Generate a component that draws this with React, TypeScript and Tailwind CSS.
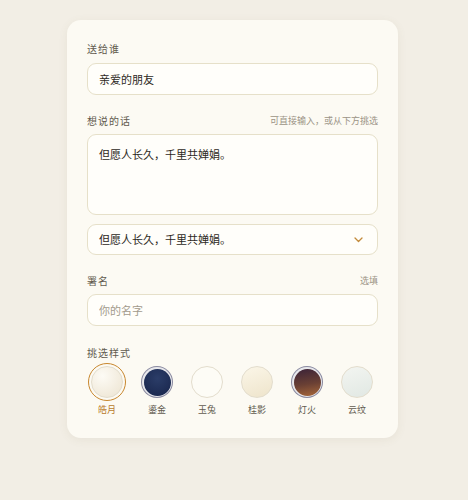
import { useState } from "react";

const styles = [
  { name: "皓月", bg: "bg-[radial-gradient(circle_at_35%_30%,#fdfbf5,#ece3d0)]", ring: "" },
  { name: "鎏金", bg: "bg-[radial-gradient(circle_at_50%_35%,#2b3d68,#17244a)]", ring: "dark" },
  { name: "玉兔", bg: "bg-[#fdfcf6]", ring: "" },
  { name: "桂影", bg: "bg-[linear-gradient(160deg,#fbf6e8,#eee4cb)]", ring: "" },
  { name: "灯火", bg: "bg-[linear-gradient(170deg,#3a2238,#6a4034_55%,#a8683a)]", ring: "dark" },
  { name: "云纹", bg: "bg-[linear-gradient(160deg,#f3f5f1,#e1e8e3)]", ring: "" },
];

const font = { fontFamily: '"Noto Sans CJK SC", "Noto Sans", sans-serif' };

const App = () => {
  const [picked, setPicked] = useState(0);

  return (
    <div className="flex min-h-[500px] justify-center bg-[#f2eee5] pt-5 pr-[3px]" style={font}>
      <div className="h-fit w-[331px] rounded-[14px] bg-[#fcfaf3] px-5 pt-[21px] pb-[22px] shadow-[0_2px_10px_rgba(120,100,60,0.08)]">
        {/* 送给谁 */}
        <div className="h-[15px] text-[10px] leading-[15px] tracking-[1px] text-[#625a4f]">送给谁</div>
        <input
          defaultValue="亲爱的朋友"
          className="mt-[7px] block h-8 w-full rounded-[9px] border border-[#e6e0c9] bg-[#fffefa] px-[11px] text-[11px] text-[#2d2923] outline-none"
        />

        {/* 想说的话 */}
        <div className="mt-[18px] flex h-[15px] items-center justify-between">
          <span className="text-[10px] leading-[15px] tracking-[1px] text-[#625a4f]">想说的话</span>
          <span className="text-[9px] text-[#9b9385]">可直接输入，或从下方挑选</span>
        </div>
        <textarea
          defaultValue="但愿人长久，千里共婵娟。"
          className="mt-[6px] block h-[81px] w-full resize-none rounded-[9px] border border-[#e6e0c9] bg-[#fffefa] px-[11px] pt-[11px] text-[11px] leading-[16px] text-[#2d2923] outline-none"
        />
        <div className="mt-[9px] flex h-[31px] items-center justify-between rounded-[9px] border border-[#e6e0c9] bg-[#fffefa] pl-[11px] pr-[14px]">
          <span className="text-[11px] text-[#2d2923]">但愿人长久，千里共婵娟。</span>
          <svg width="9" height="6" viewBox="0 0 9 6" fill="none">
            <path d="M1 1l3.5 3.5L8 1" stroke="#c28a3a" strokeWidth="1.3" strokeLinecap="round" strokeLinejoin="round" />
          </svg>
        </div>

        {/* 署名 */}
        <div className="mt-[18px] flex h-[15px] items-center justify-between">
          <span className="text-[10px] leading-[15px] tracking-[1px] text-[#625a4f]">署名</span>
          <span className="text-[9px] text-[#9b9385]">选填</span>
        </div>
        <input
          placeholder="你的名字"
          className="mt-[6px] block h-8 w-full rounded-[9px] border border-[#e6e0c9] bg-[#fffefa] px-[11px] text-[11px] text-[#2d2923] outline-none placeholder:text-[#a29a8c]"
        />

        {/* 挑选样式 */}
        <div className="mt-[19px] h-[15px] text-[10px] leading-[15px] tracking-[1px] text-[#625a4f]">挑选样式</div>
        <div className="mt-[3px] flex gap-2.5">
          {styles.map((s, i) => (
            <button key={s.name} onClick={() => setPicked(i)} className="flex w-10 flex-col items-center">
              <span
                className={`flex h-[38px] w-[38px] items-center justify-center rounded-full ${
                  picked === i ? "border-[1.5px] border-[#c8872e]" : ""
                }`}
              >
                {s.ring === "dark" ? (
                  <span className="flex h-8 w-8 items-center justify-center rounded-full bg-[#8a8aa0] p-[1px]">
                    <span className="flex h-full w-full rounded-full bg-white/80 p-[1.5px]">
                      <span className={`h-full w-full rounded-full ${s.bg}`} />
                    </span>
                  </span>
                ) : (
                  <span className={`h-8 w-8 rounded-full border border-[#e3ddcd] ${s.bg}`} />
                )}
              </span>
              <span
                className={`mt-[2px] text-[9px] leading-[13px] ${
                  picked === i ? "text-[#b97a2b]" : "text-[#625a4f]"
                }`}
              >
                {s.name}
              </span>
            </button>
          ))}
        </div>
      </div>
    </div>
  );
};

export default App;
